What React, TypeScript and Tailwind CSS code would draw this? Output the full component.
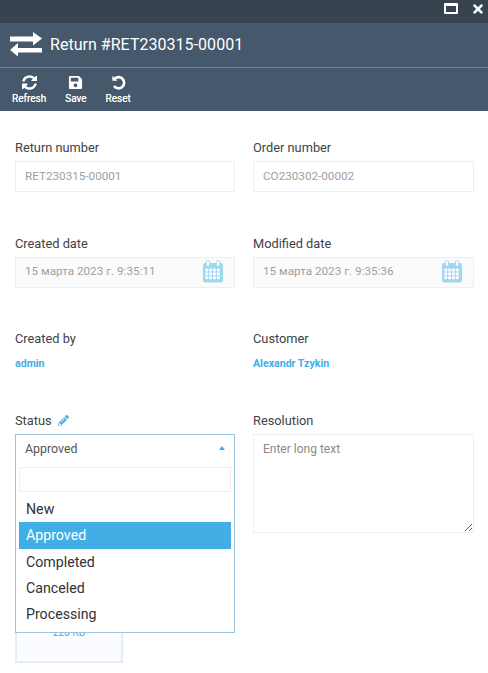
import React from "react";
import { FaSave, FaPencilAlt, FaTimes } from "react-icons/fa";

function Calendar() {
  return (
    <svg width="22" height="23" viewBox="0 0 22 24" className="-mt-[2px] shrink-0">
      <rect x="0.5" y="3" width="21" height="20.5" rx="2.5" fill="#9fd6f2" />
      <rect x="4" y="0.5" width="3.5" height="6" rx="1.7" fill="#fff" stroke="#9fd6f2" />
      <rect x="14.5" y="0.5" width="3.5" height="6" rx="1.7" fill="#fff" stroke="#9fd6f2" />
      {[9, 13, 17].flatMap((y) =>
        [3, 7, 11, 15].map((x) => <rect key={`${x}-${y}`} x={x} y={y} width="3" height="3" fill="#fff" />)
      )}
    </svg>
  );
}

function Field({ label, value }: { label: string; value: string }) {
  return (
    <div className="flex flex-col">
      <div className="h-[17px] text-[12.8px] leading-[17px] text-[#424242]">{label}</div>
      <div className="mt-[5px] flex h-[31px] items-center border border-[#eeeef2] pl-[9px] text-[11.7px] text-[#a0a0a0]">{value}</div>
    </div>
  );
}

function DateField({ label, value }: { label: string; value: string }) {
  return (
    <div className="flex flex-col">
      <div className="h-[17px] text-[12.8px] leading-[17px] text-[#424242]">{label}</div>
      <div className="mt-[5px] flex h-[31px] items-center justify-between border border-[#eeeef2] bg-[#fbfbfb] pl-[9px] pr-[10px] text-[11.7px] text-[#a0a0a0]">
        <span className="-mt-[1px]">{value}</span>
        <Calendar />
      </div>
    </div>
  );
}

function LinkField({ label, value }: { label: string; value: string }) {
  return (
    <div className="flex flex-col">
      <div className="h-[17px] text-[12.8px] leading-[17px] text-[#424242]">{label}</div>
      <div className="mt-[9px] text-[10.6px] font-bold leading-[16px] text-[#41aee6]">{value}</div>
    </div>
  );
}

function ToolButton({ icon, label }: { icon: React.ReactNode; label: string }) {
  return (
    <div className="flex flex-col items-center">
      <div className="flex h-[17px] items-center justify-center">{icon}</div>
      <div className="mt-[1px] text-[10px] leading-[13px] text-white [text-shadow:0_0_0.5px_#fff]">{label}</div>
    </div>
  );
}

export default function App() {
  return (
    <div className="flex h-[673px] w-[488px] flex-col overflow-hidden bg-white font-['Roboto',sans-serif]">
      <div className="flex h-[23px] shrink-0 items-center justify-end gap-[13px] bg-[#37444f] pb-[6px] pr-[3px]">
        <div className="h-[11px] w-[14px] rounded-[1px] border-2 border-t-[3px] border-white" />
        <FaTimes className="text-white" size={14} />
      </div>
      <div className="h-[88px] shrink-0 bg-[#46586b]">
        <div className="flex h-[45px] items-center border-b border-[#75838f] pl-[10px]">
          <svg width="32" height="25" viewBox="0 0 32 25" fill="#fff" className="-mt-[1px]">
            <path d="M0 4.5H23V0L32 6.5 23 13.5V9.5H0z" />
            <path d="M32 16H8V11L0 18 8 24.5V20.5H32z" />
          </svg>
          <span className="ml-[8px] text-[16px] tracking-[0.002em] text-white">Return #RET230315-00001</span>
        </div>
        <div className="flex gap-[19px] pl-[12px] pt-[6px]">
          <ToolButton
            label="Refresh"
            icon={
              <svg width="15" height="15" viewBox="0 0 1536 1536" fill="#fff">
                <path d="M1511 896q0 5-1 7-64 268-268 434.5T764 1504q-146 0-282.5-55T238 1292l-129 129q-19 19-45 19t-45-19-19-45V928q0-26 19-45t45-19h448q26 0 45 19t19 45-19 45l-137 137q71 66 161 102t187 36q134 0 250-65t186-179q11-17 53-117 8-23 30-23h192q13 0 22.5 9.5t9.5 22.5zm25-800v448q0 26-19 45t-45 19h-448q-26 0-45-19t-19-45 19-45l138-138Q969 256 768 256q-134 0-250 65T332 500q-11 17-53 117-8 23-30 23H50q-13 0-22.5-9.5T18 608v-7q65-268 270-434.5T768 0q146 0 284 55.5T1297 212l130-129q19-19 45-19t45 19 19 45z" transform="translate(0 16)" />
              </svg>
            }
          />
          <ToolButton label="Save" icon={<FaSave className="text-white" size={15} />} />
          <ToolButton
            label="Reset"
            icon={
              <svg width="15" height="15" viewBox="0 0 15 15" fill="none" stroke="#fff" strokeWidth="2.6">
                <path d="M3.2 4.2A5.6 5.6 0 1 1 3 11" />
                <path d="M1.4 0.8v5h5z" fill="#fff" stroke="none" />
              </svg>
            }
          />
        </div>
      </div>

      <div className="grid grid-cols-[220px_221px] gap-x-[18px] pl-[15px] pt-[28px]">
        <Field label="Return number" value="RET230315-00001" />
        <Field label="Order number" value="CO230302-00002" />
        <div className="col-span-2 h-[43px]" />
        <DateField label="Created date" value="15 марта 2023 г. 9:35:11" />
        <DateField label="Modified date" value="15 марта 2023 г. 9:35:36" />
        <div className="col-span-2 h-[42px]" />
        <LinkField label="Created by" value="admin" />
        <LinkField label="Customer" value="Alexandr Tzykin" />
        <div className="col-span-2 h-[40px]" />

        <div className="relative flex flex-col">
          <div className="flex h-[17px] items-center gap-[6px] text-[12.8px] leading-[17px] text-[#424242]">
            Status <FaPencilAlt className="-mt-[1px] text-[#55b3e8]" size={11} />
          </div>
          <div className="mt-[5px] h-[31px]" />
          <div className="absolute left-0 right-0 top-[22px] z-10 h-[199px] border border-[#9cc4dc] bg-white">
            <div className="relative flex h-[28px] items-center pl-[9px] text-[12.4px] text-[#555]">
              Approved
              <div className="absolute right-[9px] top-[11px] h-0 w-0 border-x-[3.5px] border-b-[4px] border-x-transparent border-b-[#41aee6]" />
            </div>
            <div className="mx-[3px] mt-[4px] h-[25px] border border-[#eeeef2]" />
            <div className="mx-[3px] mt-[4px] flex flex-col text-[14.2px] text-[#333]">
              <div className="flex h-[26.4px] items-center pl-[7px]">New</div>
              <div className="flex h-[27px] items-center bg-[#41aee6] pl-[7px] text-white">Approved</div>
              <div className="flex h-[26px] items-center pl-[7px]">Completed</div>
              <div className="flex h-[26.4px] items-center pl-[7px]">Canceled</div>
              <div className="flex h-[26.2px] items-center pl-[7px]">Processing</div>
            </div>
          </div>
          <div className="mt-[165px] flex h-[33px] w-[108px] justify-center border-2 border-[#e4edf4] bg-[#fbfcff] text-[10px] leading-[10px] text-[#41aee6]">
            <span className="-mt-[4px]">220 КБ</span>
          </div>
        </div>
        <div className="flex flex-col">
          <div className="h-[17px] text-[12.8px] leading-[17px] text-[#424242]">Resolution</div>
          <textarea
            readOnly
            placeholder="Enter long text"
            className="mt-[5px] h-[99px] w-[221px] border border-[#eeeef2] px-[9px] py-[6px] text-[12px] leading-[16px] outline-none placeholder:text-[#8a8a8a]"
          />
        </div>
      </div>
    </div>
  );
}
